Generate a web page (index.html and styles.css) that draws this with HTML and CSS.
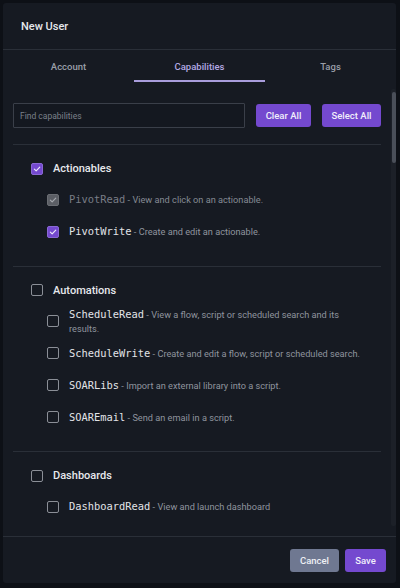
FILE: index.html
```html
<!DOCTYPE html>
<html lang="en">
<head>
<meta charset="utf-8">
<title>New User</title>
<link rel="stylesheet" href="styles.css">
</head>
<body>
<div class="modal">
  <header class="modal-header">New User</header>
  <nav class="tabs">
    <div class="tab">Account</div>
    <div class="tab active">Capabilities</div>
    <div class="tab">Tags</div>
  </nav>
  <div class="body">
    <div class="scroll">
      <div class="toolbar">
        <input class="search" type="text" placeholder="Find capabilities">
        <button class="btn primary">Clear All</button>
        <button class="btn primary">Select All</button>
      </div>

      <section class="group">
        <div class="group-head">
          <span class="cb checked"><svg viewBox="0 0 12 12"><path d="M2.8 6.2 L5 8.3 L9.3 3.8"/></svg></span>
          <span class="group-title">Actionables</span>
        </div>
        <div class="item">
          <span class="cb disabled"><svg viewBox="0 0 12 12"><path d="M2.8 6.2 L5 8.3 L9.3 3.8"/></svg></span>
          <p class="item-text muted"><code>PivotRead</code> <span class="desc">- View and click on an actionable.</span></p>
        </div>
        <div class="item">
          <span class="cb checked"><svg viewBox="0 0 12 12"><path d="M2.8 6.2 L5 8.3 L9.3 3.8"/></svg></span>
          <p class="item-text"><code>PivotWrite</code> <span class="desc">- Create and edit an actionable.</span></p>
        </div>
      </section>

      <section class="group">
        <div class="group-head">
          <span class="cb"></span>
          <span class="group-title">Automations</span>
        </div>
        <div class="item">
          <span class="cb"></span>
          <p class="item-text"><code>ScheduleRead</code> <span class="desc">- View a flow, script or scheduled search and its results.</span></p>
        </div>
        <div class="item">
          <span class="cb"></span>
          <p class="item-text"><code>ScheduleWrite</code> <span class="desc">- Create and edit a flow, script or scheduled search.</span></p>
        </div>
        <div class="item">
          <span class="cb"></span>
          <p class="item-text"><code>SOARLibs</code> <span class="desc">- Import an external library into a script.</span></p>
        </div>
        <div class="item">
          <span class="cb"></span>
          <p class="item-text"><code>SOAREmail</code> <span class="desc">- Send an email in a script.</span></p>
        </div>
      </section>

      <section class="group">
        <div class="group-head">
          <span class="cb"></span>
          <span class="group-title">Dashboards</span>
        </div>
        <div class="item">
          <span class="cb"></span>
          <p class="item-text"><code>DashboardRead</code> <span class="desc">- View and launch dashboard</span></p>
        </div>
      </section>
    </div>
    <div class="scrollbar"><div class="thumb"></div></div>
  </div>
  <footer class="footer">
    <button class="btn secondary">Cancel</button>
    <button class="btn primary">Save</button>
  </footer>
</div>
</body>
</html>
```

FILE: styles.css
```css
* { box-sizing: border-box; }

html, body {
  margin: 0;
  padding: 0;
  background: #0d1016;
}

body {
  padding: 3px 4px 5px 3px;
  font-family: Roboto, "Liberation Sans", sans-serif;
  color: #e4e6ea;
}

.modal {
  width: 393px;
  height: 580px;
  background: #161a22;
  border-radius: 3px;
  display: flex;
  flex-direction: column;
  overflow: hidden;
}

.modal-header {
  height: 47px;
  padding: 0 18px;
  display: flex;
  align-items: center;
  font-size: 11px;
  font-weight: 500;
  color: #e6e8ec;
  border-bottom: 1px solid #2a2f38;
  flex: none;
}

.tabs {
  display: grid;
  grid-template-columns: 1fr 1fr 1fr;
  height: 32px;
  flex: none;
}

.tab {
  display: flex;
  align-items: center;
  justify-content: center;
  font-size: 9.5px;
  font-weight: 500;
  color: #9a9fa9;
  border-bottom: 2px solid transparent;
  padding-top: 2px;
}

.tab.active {
  color: #b3a9e4;
  border-bottom-color: #a99ddc;
}

.body {
  flex: 1;
  position: relative;
  overflow: hidden;
  border-bottom: 1px solid #2a2f38;
}

.scroll {
  height: 100%;
  overflow: hidden;
  padding: 21px 15px 0 10px;
}

.toolbar {
  display: flex;
  align-items: center;
  gap: 11px;
  padding-bottom: 16px;
  border-bottom: 1px solid #2a2f38;
}

.search {
  flex: 1;
  min-width: 0;
  height: 25px;
  background: #141820;
  border: 1px solid #3a3f49;
  border-radius: 1px;
  padding: 0 6px;
  font-family: Roboto, "Liberation Sans", sans-serif;
  font-size: 8.5px;
  color: #d0d3d8;
  outline: none;
}

.search::placeholder { color: #7b808a; }

.btn {
  flex: none;
  height: 23px;
  border: none;
  border-radius: 3px;
  font-family: Roboto, "Liberation Sans", sans-serif;
  font-size: 9.5px;
  font-weight: 500;
  color: #f1eefb;
  padding: 0;
  white-space: nowrap;
  cursor: pointer;
}

.btn.primary { background: #7449cf; }
.btn.secondary { background: #6f7891; color: #eef0f4; }

.toolbar .btn:nth-of-type(1) { width: 55px; }
.toolbar .btn:nth-of-type(2) { width: 59px; }

.group {
  padding: 12.5px 0 18px 18px;
  border-bottom: 1px solid #2a2f38;
}

.group-head {
  height: 22px;
  display: flex;
  align-items: center;
  gap: 10px;
}

.group-title {
  font-size: 11px;
  font-weight: 500;
  color: #e6e8ec;
}

.item {
  min-height: 32px;
  display: flex;
  align-items: center;
  gap: 10px;
  padding-left: 16px;
  padding-right: 16px;
}

.group-head + .item { margin-top: 4px; }

.item-text {
  margin: 0;
  font-size: 9.2px;
  line-height: 14px;
  color: #e2e4e8;
}

.item-text code {
  font-family: "DejaVu Sans Mono", "Liberation Mono", monospace;
  font-size: 10.4px;
  color: #e2e4e8;
}

.desc { color: #8f949e; }

.item-text.muted code { color: #797d86; }
.item-text.muted .desc { color: #858a94; }

.cb {
  flex: none;
  width: 12px;
  height: 12px;
  border: 1.5px solid #8b8f97;
  border-radius: 2px;
  display: flex;
  align-items: center;
  justify-content: center;
}

.cb svg {
  width: 12px;
  height: 12px;
  fill: none;
  stroke-width: 1.4;
  stroke-linecap: round;
  stroke-linejoin: round;
}

.cb.checked {
  background: #7449cf;
  border-color: #8a68d6;
}
.cb.checked svg { stroke: #ece6fb; }

.cb.disabled {
  background: #5b5e65;
  border-color: #6a6d73;
}
.cb.disabled svg { stroke: #a5a8ae; }

.scrollbar {
  position: absolute;
  top: 7px;
  right: 0;
  bottom: 10px;
  width: 5px;
  background: #1c2028;
  border-radius: 2px;
}

.thumb {
  margin-top: 3px;
  height: 71px;
  width: 4px;
  margin-left: 1px;
  background: #4a4f59;
  border-radius: 2px;
}

.footer {
  flex: none;
  height: 46px;
  display: flex;
  align-items: center;
  justify-content: flex-end;
  gap: 6px;
  padding: 0 10px 0 0;
}

.footer .btn:nth-of-type(1) { width: 49px; }
.footer .btn:nth-of-type(2) { width: 41px; }
```
